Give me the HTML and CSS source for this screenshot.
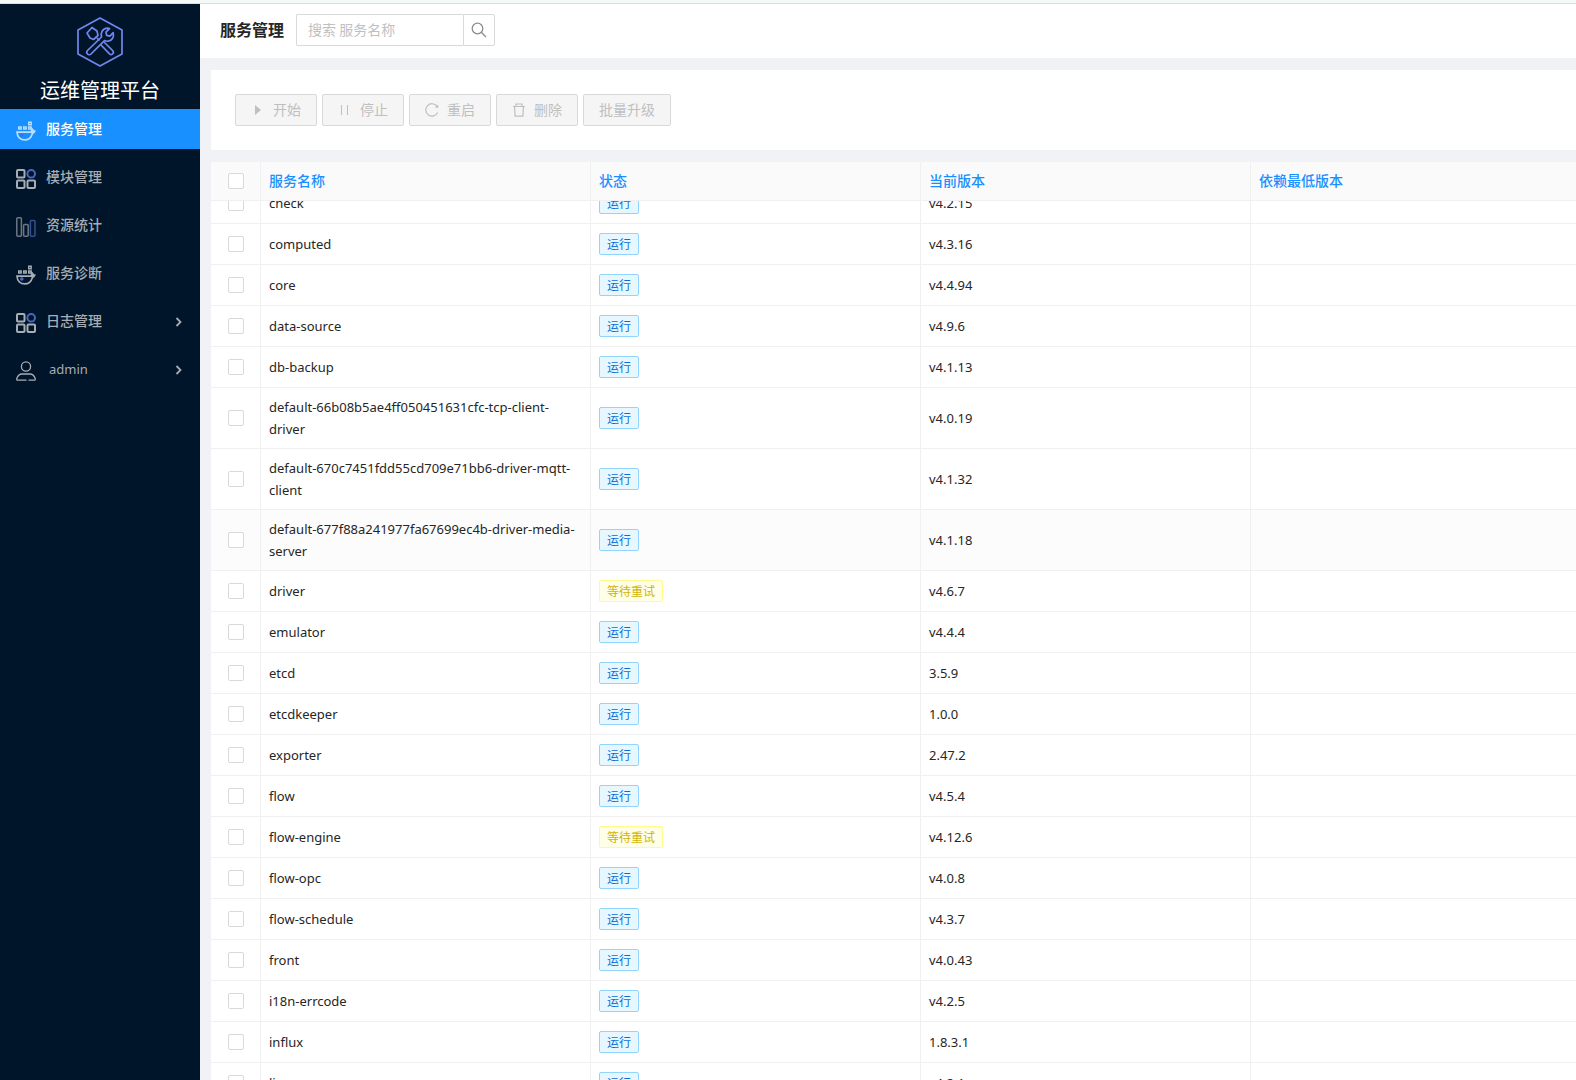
FILE: index.html
```html
<!DOCTYPE html>
<html lang="zh-CN">
<head>
<meta charset="utf-8">
<title>运维管理平台</title>
<link rel="stylesheet" href="styles.css">
</head>
<body>
<svg class="sprite" aria-hidden="true">
  <symbol id="i-docker" viewBox="0 0 20 20" fill="none">
    <path d="M12.700 1.200h2.500v2.500h-2.500zM2.700 6h2.500v2h-2.500zM7.700 6h2.500v2h-2.500zM12.700 6h2.500v2h-2.500z" stroke="currentColor" stroke-width="1.400"/>
    <path d="M1 11.200h14.600V7.500c1 .7 1.600 1.700 1.800 2.600h1.300c-.3 1.400-1 2.100-2.300 2.300-1.200 4.200-3.700 6.500-7.600 6.500C4.400 18.900 1.300 16 1 11.200z" stroke="currentColor" stroke-width="1.700"/>
    <path d="M15.600 7.200l2.200 2.800h1.300l-1.600 2.200h-1.900z" fill="currentColor"/>
    <circle cx="5.800" cy="14" r="1.800" fill="#4a68c8"/>
  </symbol>
  <symbol id="i-grid" viewBox="0 0 20 20" fill="none" stroke-width="2">
    <rect x="1" y="1" width="7.500" height="7.500" rx="1" stroke="currentColor"/>
    <rect x="1" y="11.500" width="7.500" height="7.500" rx="1" stroke="currentColor"/>
    <rect x="11.500" y="11.500" width="7.500" height="7.500" rx="1" stroke="currentColor"/>
    <circle cx="15.200" cy="4.800" r="3.800" stroke="#4a66bd"/>
  </symbol>
  <symbol id="i-bars" viewBox="0 0 20 20" fill="none" stroke-width="1.500">
    <rect x=".8" y=".8" width="4.600" height="18.400" rx="1" stroke="#6c7784"/>
    <rect x="7.600" y="7.600" width="4.600" height="11.600" rx="1" stroke="#6c7784"/>
    <rect x="14.400" y="3.600" width="4.600" height="15.600" rx="1" stroke="#34508f"/>
  </symbol>
  <symbol id="i-user" viewBox="0 0 20 20" fill="none" stroke="currentColor" stroke-width="1.300" stroke-linecap="round">
    <circle cx="10" cy="5.500" r="4.600"/>
    <path d="M13 19.200h5.200c1 0 1.300-.8 1-1.700-1-2.800-3-4.500-5.200-4.500H6C3.800 13 1.800 14.700.8 17.500c-.3.900 0 1.700 1 1.700H10"/>
  </symbol>
  <symbol id="i-arrow" viewBox="0 0 8 10" fill="none" stroke="currentColor" stroke-width="1.800">
    <path d="M1.500 1l4 4-4 4"/>
  </symbol>
  <symbol id="i-search" viewBox="0 0 16 16" fill="none" stroke="currentColor" stroke-width="1.300">
    <circle cx="6.500" cy="6.500" r="5.300"/><path d="M10.300 10.300l4.700 4.700"/>
  </symbol>
  <symbol id="i-play" viewBox="0 0 14 14"><path d="M4 2l6 5-6 5z" fill="currentColor"/></symbol>
  <symbol id="i-pause" viewBox="0 0 14 14"><path d="M3 2h1v10h-1zM9 2h1v10h-1z" fill="currentColor"/></symbol>
  <symbol id="i-reload" viewBox="0 0 14 14" fill="none" stroke="currentColor" stroke-width="1.200">
    <path d="M12.600 9.500A6.200 6.200 0 1 1 12 3.300"/><path d="M13.200 1.400v3.500l-3.300-.3z" fill="currentColor" stroke="none"/>
  </symbol>
  <symbol id="i-trash" viewBox="0 0 14 14" fill="none" stroke="currentColor" stroke-width="1.200">
    <path d="M1 3.500h12M4 3.500v-2.500h6v2.500M2.500 3.500l.6 9.700h7.800l.6-9.700"/>
  </symbol>
</svg>

<div class="strip"></div>
<div class="app">
  <aside class="sidebar">
    <div class="brand">
      <svg class="logo" viewBox="0 0 46 50" fill="none" stroke="#7186f0" stroke-width="1.700" stroke-linejoin="round">
        <path d="M23 1L45 13v24L23 49 1 37V13z"/>
        <path d="M10 16l5-5.500 5 3.500 1 4.500-4.500 4-3.500-1.500z"/>
        <path d="M20 21l2.500 2.500M24 28l8.500 8.800c1.200 1 2.600.8 3.300 0 .8-.9.700-2.300-.2-3.300L27 25"/>
        <path d="M10.500 33.500L24.500 20c-1.200-4 .8-8.500 6-8.800l2 .4-3.500 3.600.6 3.200 3.300.8 3.300-3.500c1 3.800-1 8.200-5 8.500-1.500.2-2.700-.1-3.700-.6L14 37c-1 1-2.600 1-3.500 0s-1-2.500 0-3.500z"/>
      </svg>
      <div class="brand-name">运维管理平台</div>
    </div>
    <nav class="menu">
      <a class="menu-item active" href="#services"><svg class="menu-icon"><use href="#i-docker"/></svg><span class="label">服务管理</span></a>
      <a class="menu-item" href="#modules"><svg class="menu-icon"><use href="#i-grid"/></svg><span class="label">模块管理</span></a>
      <a class="menu-item" href="#resources"><svg class="menu-icon"><use href="#i-bars"/></svg><span class="label">资源统计</span></a>
      <a class="menu-item" href="#diagnose"><svg class="menu-icon"><use href="#i-docker"/></svg><span class="label">服务诊断</span></a>
      <a class="menu-item" href="#logs"><svg class="menu-icon"><use href="#i-grid"/></svg><span class="label">日志管理</span><svg class="menu-arrow"><use href="#i-arrow"/></svg></a>
      <a class="menu-item" href="#account"><svg class="menu-icon"><use href="#i-user"/></svg><span class="user-name">admin</span><svg class="menu-arrow"><use href="#i-arrow"/></svg></a>
    </nav>
  </aside>

  <div class="main">
    <header class="topbar">
      <h1 class="label">服务管理</h1>
      <form class="search" role="search">
        <input type="text" placeholder="搜索 服务名称" aria-label="搜索 服务名称">
        <button type="button" aria-label="搜索"><svg><use href="#i-search"/></svg></button>
      </form>
    </header>
    <main class="content">
      <section class="toolbar">
        <button type="button" class="btn" disabled><svg><use href="#i-play"/></svg><span class="label">开始</span></button>
        <button type="button" class="btn" disabled><svg><use href="#i-pause"/></svg><span class="label">停止</span></button>
        <button type="button" class="btn" disabled><svg><use href="#i-reload"/></svg><span class="label">重启</span></button>
        <button type="button" class="btn" disabled><svg><use href="#i-trash"/></svg><span class="label">删除</span></button>
        <button type="button" class="btn" disabled><span class="label">批量升级</span></button>
      </section>
      <section class="table-wrap" id="table-wrap">
        <table>
          <colgroup><col class="col-check"><col><col><col><col></colgroup>
          <thead>
            <tr>
              <th class="check" scope="col"><input type="checkbox" aria-label="全选"></th>
              <th scope="col">服务名称</th>
              <th scope="col">状态</th>
              <th scope="col">当前版本</th>
              <th scope="col">依赖最低版本</th>
            </tr>
          </thead>
          <tbody id="rows"></tbody>
        </table>
      </section>
    </main>
  </div>
</div>
<script src="app.js"></script>
</body>
</html>
```
FILE: styles.css
```css
* { box-sizing: border-box; }

body {
  margin: 0;
  height: 100vh;
  display: flex;
  flex-direction: column;
  overflow: hidden;
  background: #f0f2f5;
  color: #262626;
  font: 14px/22px "Noto Sans CJK SC", sans-serif;
}

button, input { font: inherit; }

.sprite { display: none; }

/* optical centring of Chinese labels beside icons */
.label { padding-bottom: 2px; }

.strip {
  flex: none;
  height: 4px;
  background: #f3faf8;
  border-bottom: 1px solid #d9e1df;
}

.app {
  flex: 1;
  min-height: 0;
  display: flex;
}

/* sidebar */
.sidebar {
  flex: none;
  width: 200px;
  background: #001529;
}

.brand {
  display: flex;
  flex-direction: column;
  align-items: center;
  padding: 13px 0 1px;
}

.logo { width: 46px; height: 50px; }

.brand-name {
  margin-top: 5px;
  font-size: 20px;
  line-height: 36px;
  color: #fff;
}

.menu {
  display: flex;
  flex-direction: column;
  gap: 8px;
}

.menu-item {
  display: flex;
  align-items: center;
  gap: 10px;
  height: 40px;
  padding: 0 17px 0 16px;
  color: #a6adb4;
  font-weight: 500;
  text-decoration: none;
}

.menu-item.active { background: #1890ff; color: #fff; }

.menu-icon { width: 20px; height: 20px; margin-top: 4px; }
.active .menu-icon { opacity: 0.7; }
.menu-arrow { width: 8px; height: 10px; margin: 2px 0 0 auto; }

.user-name {
  padding-left: 3px;
  font-family: "Noto Sans", sans-serif;
  font-size: 13px;
  font-weight: 400;
}

/* main column */
.main {
  flex: 1;
  min-width: 0;
  display: flex;
  flex-direction: column;
}

.topbar {
  flex: none;
  display: flex;
  align-items: center;
  gap: 12px;
  height: 54px;
  padding: 0 20px 2px;
  background: #fff;
}

h1 { margin: 0; font-size: 16px; line-height: 24px; font-weight: 700; }

.search { display: flex; }

.search input {
  width: 167px;
  height: 32px;
  padding: 0 11px 2px;
  border: 1px solid #d9d9d9;
  border-right: 0;
  border-radius: 2px 0 0 2px;
  outline: 0;
}

.search input::placeholder { color: #bfbfbf; }

.search button {
  display: grid;
  place-items: center;
  width: 32px;
  height: 32px;
  padding: 0;
  border: 1px solid #d9d9d9;
  border-radius: 0 2px 2px 0;
  background: #fff;
  color: #8c8c8c;
}

.search svg { width: 16px; height: 16px; }

.content {
  flex: 1;
  min-height: 0;
  display: flex;
  flex-direction: column;
  gap: 12px;
  padding: 12px 0 0 11px;
}

.toolbar {
  flex: none;
  display: flex;
  gap: 5px;
  padding: 24px;
  background: #fff;
}

.btn {
  display: flex;
  align-items: center;
  gap: 8px;
  height: 32px;
  padding: 0 15px;
  border: 1px solid #d9d9d9;
  border-radius: 2px;
  background: #f5f5f5;
  color: #bfbfbf;
}

.btn svg { width: 14px; height: 14px; }

/* service table */
.table-wrap {
  flex: 1;
  min-height: 0;
  overflow: auto;
  scrollbar-width: none;
  background: #fff;
}

table {
  width: 100%;
  min-width: 1370px;
  table-layout: fixed;
  border-collapse: separate;
  border-spacing: 0;
}

.col-check { width: 50px; }

th, td {
  padding: 8px;
  border-right: 1px solid #f0f0f0;
  border-bottom: 1px solid #f0f0f0;
  text-align: left;
  vertical-align: middle;
}

th {
  position: sticky;
  top: 0;
  z-index: 1;
  padding: 7px 8px 9px;
  background: #fafafa;
  color: #1890ff;
  font-weight: 500;
}

td {
  height: 41px;
  font-family: "Noto Sans", "Noto Sans CJK SC", sans-serif;
  font-size: 13px;
}

tr.hover td { background: #fcfcfc; }

.check { padding: 8px 8px 8px 17px; }

input[type="checkbox"] {
  appearance: none;
  display: block;
  width: 16px;
  height: 16px;
  margin: 0;
  border: 1px solid #d9d9d9;
  border-radius: 2px;
  background: #fff;
}

.tag {
  display: block;
  width: fit-content;
  padding: 0 7px;
  border: 1px solid #91d5ff;
  border-radius: 2px;
  background: #e6f7ff;
  color: #096dd9;
  font: 12px/20px "Noto Sans CJK SC", sans-serif;
}

.tag.waiting {
  border-color: #fffb8f;
  background: #feffe6;
  color: #d4b106;
}
```
FILE: app.js
```js
const services = [
  ["check", "运行", "v4.2.15"],
  ["computed", "运行", "v4.3.16"],
  ["core", "运行", "v4.4.94"],
  ["data-source", "运行", "v4.9.6"],
  ["db-backup", "运行", "v4.1.13"],
  ["default-66b08b5ae4ff050451631cfc-tcp-client-driver", "运行", "v4.0.19"],
  ["default-670c7451fdd55cd709e71bb6-driver-mqtt-client", "运行", "v4.1.32"],
  ["default-677f88a241977fa67699ec4b-driver-media-server", "运行", "v4.1.18"],
  ["driver", "等待重试", "v4.6.7"],
  ["emulator", "运行", "v4.4.4"],
  ["etcd", "运行", "3.5.9"],
  ["etcdkeeper", "运行", "1.0.0"],
  ["exporter", "运行", "2.47.2"],
  ["flow", "运行", "v4.5.4"],
  ["flow-engine", "等待重试", "v4.12.6"],
  ["flow-opc", "运行", "v4.0.8"],
  ["flow-schedule", "运行", "v4.3.7"],
  ["front", "运行", "v4.0.43"],
  ["i18n-errcode", "运行", "v4.2.5"],
  ["influx", "运行", "1.8.3.1"],
  ["live", "运行", "v4.2.1"],
];

const HOVERED = 7;

document.getElementById("rows").innerHTML = services.map(([name, status, version], i) => `
  <tr${i === HOVERED ? ' class="hover"' : ""}>
    <td class="check"><input type="checkbox" aria-label="${name}"></td>
    <td>${name}</td>
    <td><span class="tag${status === "运行" ? "" : " waiting"}">${status}</span></td>
    <td>${version}</td>
    <td></td>
  </tr>`).join("");

document.getElementById("table-wrap").scrollTop = 18;
```
